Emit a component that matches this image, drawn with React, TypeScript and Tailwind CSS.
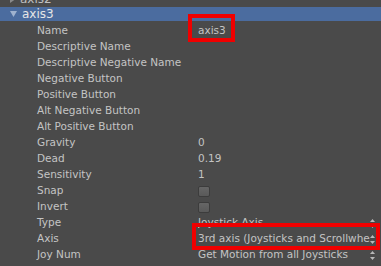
import React from "react";

const rows: { label: string; value?: React.ReactNode }[] = [
  { label: "Name", value: "axis3" },
  { label: "Descriptive Name" },
  { label: "Descriptive Negative Name" },
  { label: "Negative Button" },
  { label: "Positive Button" },
  { label: "Alt Negative Button" },
  { label: "Alt Positive Button" },
  { label: "Gravity", value: "0" },
  { label: "Dead", value: "0.19" },
  { label: "Sensitivity", value: "1" },
  { label: "Snap", value: "check" },
  { label: "Invert", value: "check" },
  { label: "Type", value: "popup:Joystick Axis" },
  { label: "Axis", value: "popup:3rd axis (Joysticks and Scrollwheel)" },
  { label: "Joy Num", value: "popup:Get Motion from all Joysticks" },
];

function Arrows() {
  return (
    <svg width="5" height="9" viewBox="0 0 5 9" className="shrink-0">
      <path d="M2.5 0 L5 3 L0 3 Z" fill="#b8b8b8" />
      <path d="M2.5 9 L5 6 L0 6 Z" fill="#b8b8b8" />
    </svg>
  );
}

function Value({ v }: { v?: React.ReactNode }) {
  if (v === undefined) return null;
  if (v === "check") {
    return (
      <div className="w-[12px] h-[11px] rounded-[2px] border border-[#3c3c3c] bg-gradient-to-b from-[#666666] to-[#595959]" />
    );
  }
  if (typeof v === "string" && v.startsWith("popup:")) {
    return (
      <div className="flex items-center w-full pr-[6px]">
        <div className="flex-1 overflow-hidden whitespace-nowrap">{v.slice(6)}</div>
        <Arrows />
      </div>
    );
  }
  return <span>{v}</span>;
}

export default function App() {
  return (
    <div
      className="relative w-[381px] h-[266px] overflow-hidden bg-[#4a4a4a] text-[#c4c4c4] text-[10.5px]"
      style={{ fontFamily: '"DejaVu Sans", sans-serif' }}
    >
      <div className="flex flex-col -mt-[9px]">
        <div className="h-[16px] flex items-center pl-[10px] gap-[5px] text-[#c0c0c0]">
          <svg width="5" height="7" viewBox="0 0 5 7">
            <path d="M0 0 L5 3.5 L0 7 Z" fill="#8a8a8a" />
          </svg>
          <span className="text-[12px]">axis2</span>
        </div>
        <div className="h-[16px]">
          <div className="h-[14px] bg-[#4b6c9f] flex items-center pl-[10px] gap-[5px] text-[#e6e6e6]">
            <svg width="7" height="6" viewBox="0 0 7 6">
              <path d="M0 0 L7 0 L3.5 6 Z" fill="#9fb2cf" />
            </svg>
            <span className="text-[12px] leading-none">axis3</span>
          </div>
        </div>
        {rows.map((r) => (
          <div key={r.label} className="h-[16px] flex items-center">
            <div className="w-[198px] pl-[37px] whitespace-nowrap">{r.label}</div>
            <div className="flex-1 flex items-center min-w-0">
              <Value v={r.value} />
            </div>
          </div>
        ))}
      </div>
      <div className="absolute left-[188px] top-[14px] w-[47px] h-[28px] border-[4px] border-[#f00000]" />
      <div className="absolute left-[192px] top-[223px] w-[188px] h-[27px] border-[4px] border-[#f00000]" />
    </div>
  );
}
